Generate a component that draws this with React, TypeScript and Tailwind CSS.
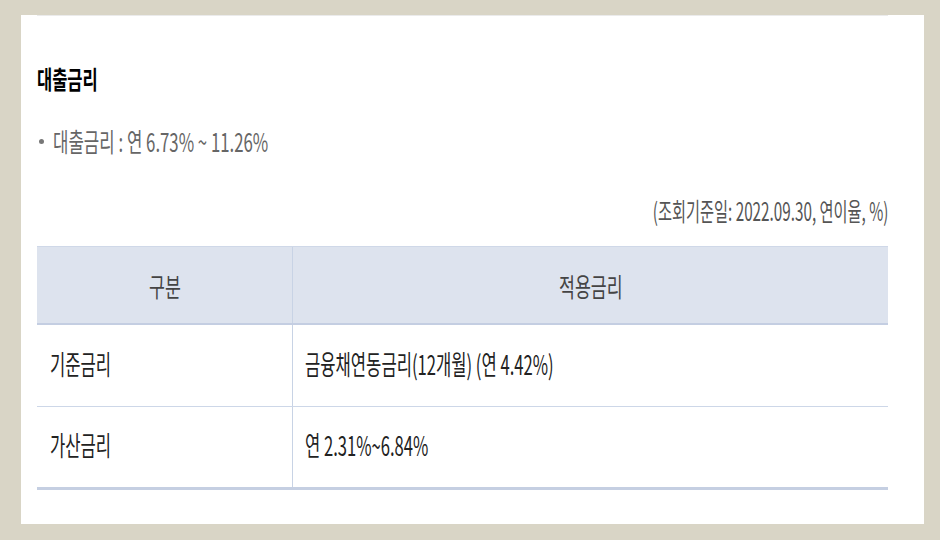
import React from "react";

const KR = "font-['Noto_Sans_CJK_KR','Noto_Sans',sans-serif]";

const Sq: React.FC<{ children: React.ReactNode; className?: string }> = ({ children, className = "" }) => (
  <span className={`inline-block whitespace-nowrap ${className}`}>{children}</span>
);

const rows = [
  { name: "기준금리", rate: "금융채연동금리(12개월) (연 4.42%)" },
  { name: "가산금리", rate: "연 2.31%~6.84%" },
];

export default function App() {
  return (
    <div className={`w-[940px] h-[540px] bg-[#d9d5c6] pt-[15px] pl-[21px] ${KR}`}>
      <div className="w-[903px] h-[509px] bg-white pl-[16px] pr-[36px]">
        <div className="border-t border-[#ebebeb]">
          <div className="mt-[50px] h-[25px] text-[25px] leading-[25px] font-bold text-black">
            <Sq className="origin-left scale-x-[0.66]">대출금리</Sq>
          </div>

          <div className="mt-[37px] h-[26px] flex items-center text-[26px] leading-[26px] text-[#666]">
            <span className="w-[5px] h-[5px] rounded-full bg-[#777] ml-[2px] mr-[9px]" />
            <Sq className="origin-left scale-x-[0.645]">대출금리 : 연 6.73% ~ 11.26%</Sq>
          </div>

          <div className="mt-[44px] h-[24px] text-right text-[25px] leading-[24px] text-[#555]">
            <Sq className="origin-right scale-x-[0.61]">(조회기준일: 2022.09.30, 연이율, %)</Sq>
          </div>

          <div className="mt-[24px]">
            <div className="flex h-[79px] border-t border-[#cfd8e8] border-b-2 border-b-[#c4cee2] bg-[#dde3ee] text-[26px] text-[#444]">
              <div className="w-[256px] flex items-center justify-center border-r border-[#c8d3e5]">
                <Sq className="scale-x-[0.665]">구분</Sq>
              </div>
              <div className="flex-1 flex items-center justify-center">
                <Sq className="scale-x-[0.665]">적용금리</Sq>
              </div>
            </div>
            {rows.map((r, i) => (
              <div
                key={r.name}
                className={`flex text-[27px] text-[#222] ${
                  i === rows.length - 1
                    ? "h-[83px] border-b-[3px] border-[#c5cfe2]"
                    : "h-[82px] border-b border-[#cdd7e8]"
                }`}
              >
                <div className="w-[256px] flex items-center pl-[13px] pb-[3px] border-r border-[#c8d3e5]">
                  <Sq className="origin-left scale-x-[0.615]">{r.name}</Sq>
                </div>
                <div className="flex-1 flex items-center pl-[12px] pb-[3px]">
                  <Sq className="origin-left scale-x-[0.615]">{r.rate}</Sq>
                </div>
              </div>
            ))}
          </div>
        </div>
      </div>
    </div>
  );
}
